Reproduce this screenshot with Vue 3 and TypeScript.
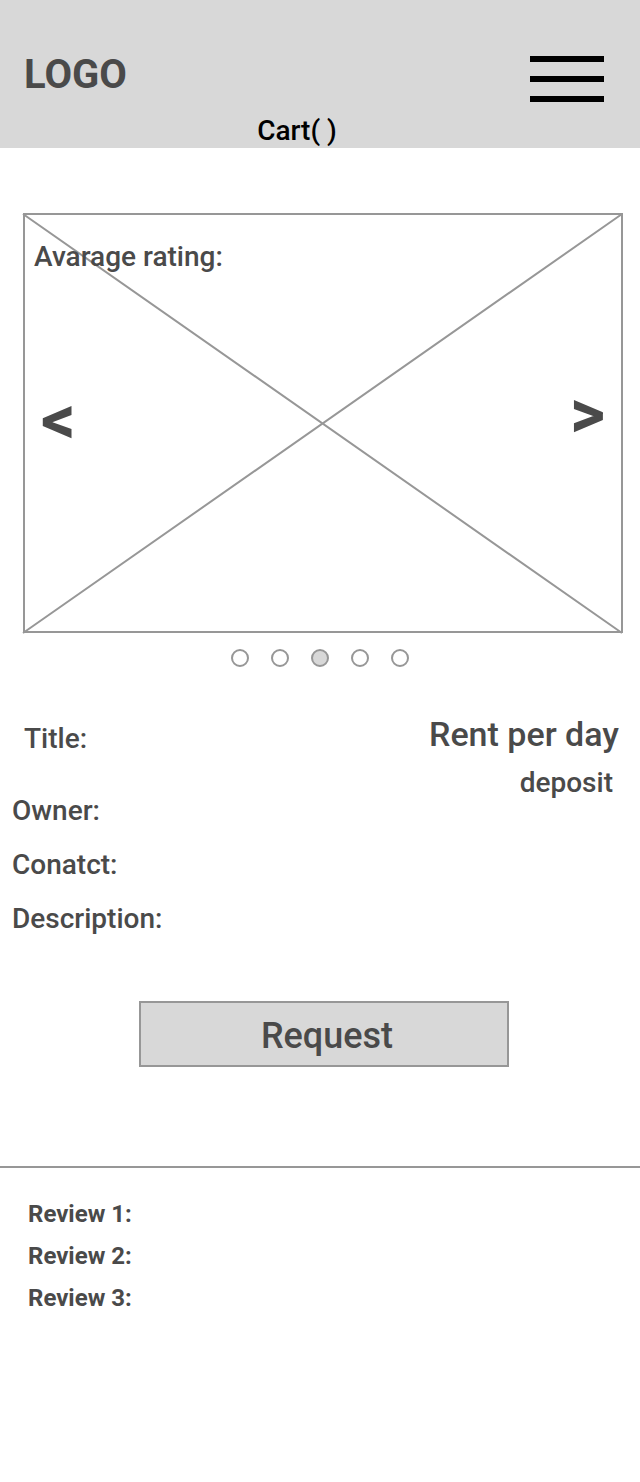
<script setup lang="ts">
import { ref } from 'vue'

const slides = 5
const current = ref(2)
const details: string[] = ['Owner:', 'Conatct:', 'Description:']
const reviews: string[] = ['Review 1:', 'Review 2:', 'Review 3:']

function step(delta: number): void {
  current.value = (current.value + delta + slides) % slides
}
</script>

<template>
  <div class="page">
    <header class="header">
      <div class="bar">
        <a class="logo" href="#">LOGO</a>
        <button class="menu" type="button" aria-label="Menu">
          <span></span>
          <span></span>
          <span></span>
        </button>
      </div>
      <a class="cart" href="#">Cart( )</a>
    </header>

    <main>
      <section class="gallery">
        <svg class="cross" viewBox="0 0 600 420" preserveAspectRatio="none" aria-hidden="true">
          <path d="M0 1L599 420M599 1L0 420" />
        </svg>
        <p class="rating">Avarage rating:</p>
        <button class="arrow prev" type="button" @click="step(-1)">&lt;</button>
        <button class="arrow next" type="button" @click="step(1)">&gt;</button>
      </section>

      <div class="dots">
        <button
          v-for="n in slides"
          :key="n"
          type="button"
          class="dot"
          :class="{ active: n - 1 === current }"
          :aria-label="`Slide ${n}`"
          @click="current = n - 1"
        ></button>
      </div>

      <section class="info">
        <div class="facts">
          <h1 class="title">Title:</h1>
          <p v-for="item in details" :key="item">{{ item }}</p>
        </div>
        <div class="price">
          <p class="rent">Rent per day</p>
          <p class="deposit">deposit</p>
        </div>
      </section>

      <div class="action">
        <button class="request" type="button">Request</button>
      </div>

      <section class="reviews">
        <p v-for="item in reviews" :key="item">{{ item }}</p>
      </section>
    </main>
  </div>
</template>

<style>
body {
  background: #fff;
}
</style>

<style scoped>
.page {
  font: 500 28px/32px Roboto, sans-serif;
  color: #4a4a4a;
}

p,
h1 {
  margin: 0;
  font-size: inherit;
  font-weight: inherit;
}

a {
  color: inherit;
  text-decoration: none;
}

button {
  padding: 0;
  border: 0;
  background: none;
  font: inherit;
  color: inherit;
  cursor: pointer;
}

.header {
  display: flex;
  flex-direction: column;
  gap: 12px;
  padding: 51px 36px 1px 24px;
  background: #d8d8d8;
}

.bar {
  display: flex;
  justify-content: space-between;
  align-items: flex-start;
}

.logo {
  font-size: 40px;
  font-weight: 700;
  line-height: 48px;
}

.menu {
  display: flex;
  flex-direction: column;
  gap: 14px;
  width: 74px;
  padding: 5px 0 1px;
}

.menu span {
  height: 6px;
  background: #000;
}

.cart {
  align-self: center;
  padding-right: 34px;
  color: #000;
}

.gallery {
  position: relative;
  box-sizing: border-box;
  aspect-ratio: 600 / 420;
  margin: 65px 17px 0 23px;
  padding: 26px 9px;
  border: 2px solid #979797;
}

.cross {
  position: absolute;
  top: -2px;
  left: -2px;
  width: calc(100% + 4px);
  height: calc(100% + 4px);
  overflow: visible;
  fill: none;
  stroke: #979797;
  stroke-width: 2;
}

.rating {
  position: relative;
}

.arrow {
  position: absolute;
  font-size: 68px;
  font-weight: 700;
  line-height: 72px;
}

.prev {
  top: 169px;
  left: 16px;
}

.next {
  top: 163px;
  right: 16px;
}

.dots {
  display: flex;
  justify-content: center;
  gap: 22px;
  padding-top: 16px;
}

.dot {
  box-sizing: border-box;
  width: 18px;
  height: 18px;
  border: 2px solid #979797;
  border-radius: 50%;
}

.dot.active {
  background: #d8d8d8;
}

.info {
  display: flex;
  justify-content: space-between;
  padding: 47px 21px 0 12px;
}

.facts {
  display: flex;
  flex-direction: column;
  gap: 22px;
  padding-top: 9px;
}

.title {
  padding: 0 0 18px 12px;
}

.price {
  text-align: right;
}

.rent {
  font-size: 34px;
  line-height: 40px;
}

.deposit {
  padding: 13px 6px 0 0;
}

.action {
  padding: 66px 131px 99px 139px;
}

.request {
  width: 100%;
  padding: 13px 0 9px 6px;
  border: 2px solid #979797;
  background: #d8d8d8;
  font-size: 36px;
  line-height: 40px;
}

.reviews {
  display: flex;
  flex-direction: column;
  gap: 14px;
  padding: 32px 28px 64px;
  border-top: 2px solid #979797;
  font-size: 24px;
  font-weight: 700;
  line-height: 28px;
}
</style>
